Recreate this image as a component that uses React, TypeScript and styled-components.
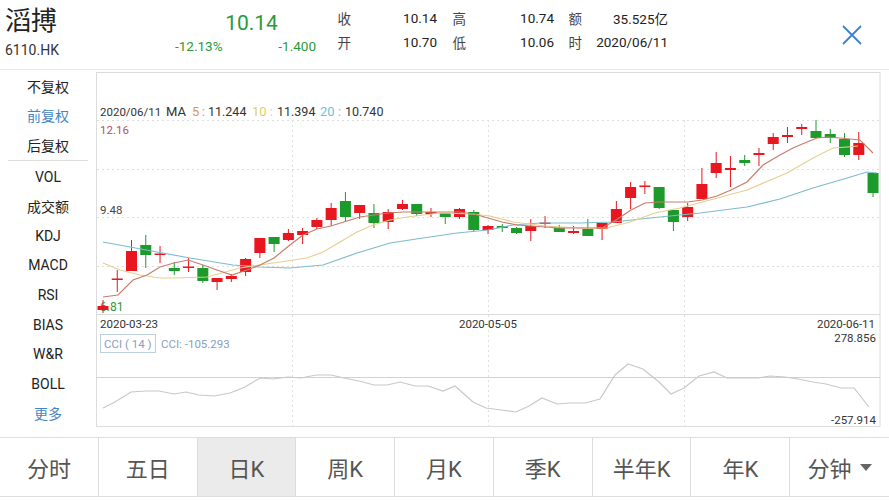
import styled, { createGlobalStyle } from 'styled-components';

const GlobalStyle = createGlobalStyle`
  html, body {
    margin: 0;
    padding: 0;
    background: #fff;
  }
  body {
    font-family: Roboto, "Noto Sans CJK SC", sans-serif;
  }
`;

const RED = '#e8161e';
const GREEN = '#1c9a2c';

// [bodyTop, bodyBottom, wickTop, wickBottom, colour]
const CANDLES: [number, number, number, number, 'r' | 'g'][] = [
  [306, 310, 300, 313, 'r'],
  [278.5, 280, 270, 292, 'r'],
  [251, 271, 240, 271, 'r'],
  [245, 255, 235, 268, 'g'],
  [253.5, 255, 246, 263, 'r'],
  [268, 271, 262, 275, 'g'],
  [266.5, 268, 258, 272, 'r'],
  [268, 281, 265, 283, 'g'],
  [278, 282, 278, 290, 'r'],
  [276, 279, 274, 282, 'r'],
  [259, 272, 258, 276, 'r'],
  [238, 253, 238, 258, 'r'],
  [237, 244, 237, 252, 'g'],
  [233, 240, 229, 241, 'r'],
  [231, 235, 228, 244, 'r'],
  [220, 227, 218, 229, 'r'],
  [208, 220, 203, 226, 'r'],
  [201, 217, 192, 222, 'g'],
  [205, 213, 205, 219, 'r'],
  [213, 223, 204, 228, 'g'],
  [212, 222, 209, 229, 'r'],
  [204, 209, 200, 210, 'r'],
  [204, 214, 204, 216, 'g'],
  [212, 214, 208, 217, 'r'],
  [213, 217, 213, 224, 'g'],
  [209, 217, 208, 219, 'r'],
  [212, 230, 210, 232, 'g'],
  [226, 230, 225, 234, 'r'],
  [226, 228, 224, 232, 'g'],
  [228, 233, 227, 234, 'g'],
  [226, 231, 219, 241, 'r'],
  [222.5, 224, 216, 228, 'r'],
  [228, 232, 225, 232, 'g'],
  [231, 233, 226, 234, 'r'],
  [229, 236, 219, 236, 'g'],
  [223, 229, 223, 240, 'r'],
  [209, 223, 201, 223, 'r'],
  [187, 198, 182, 209, 'r'],
  [185.5, 187, 181, 194, 'r'],
  [187, 208, 187, 209, 'g'],
  [210, 222, 210, 231, 'g'],
  [207, 217, 203, 221, 'r'],
  [184, 199, 168, 199, 'r'],
  [163, 173, 152, 178, 'r'],
  [168, 170, 156, 187, 'r'],
  [160, 163, 155, 166, 'g'],
  [153, 155, 148, 166, 'r'],
  [137, 144, 133, 150, 'r'],
  [135, 137, 127, 143, 'r'],
  [127, 129, 124, 135, 'r'],
  [131, 138, 120, 138, 'g'],
  [134, 138, 129, 143, 'g'],
  [139, 155, 133, 157, 'g'],
  [143, 155, 132, 160, 'r'],
  [173, 193, 173, 197, 'g'],
];

const MA5 =
  '103,297 118,295 133,280 147,275 160,267 174,263 188,260 203,265 217,270 232,275 247,270 260,265 274,258 290,245 303,235 317,229 331,226 347,221 360,217 374,215 388,213 403,212 417,212 431,212 445,212 459,212 474,214 488,218 502,222 517,225 531,226 545,227 559,228 574,228 588,228 602,228 616,220 631,210 645,203 659,202 673,202 688,202 702,200 717,196 731,190 747,182 763,165 780,155 793,148 807,142 817,138 827,137 840,138 860,140 873,153';

const MA10 =
  '103,263 120,270 140,275 160,278 175,278 207,277 240,268 273,263 307,258 323,252 340,242 357,232 373,225 390,220 407,217 440,213 473,214 490,216 513,222 545,226 580,228 607,228 630,222 655,213 680,208 710,200 747,190 787,173 813,158 833,148 847,147 858,146';

const MA20 =
  '103,242 130,247 157,252 190,258 233,265 260,267 290,268 323,265 357,253 390,243 423,238 457,233 488,230 513,225 540,223 580,223 613,222 650,218 700,213 747,207 780,199 813,188 847,178 867,172 877,173';

const CCI =
  '103,408 115,402 131,392 146,391 159,391 174,394 186,392 199,395 214,396 230,393 245,387 260,378 273,379 288,377 301,378 316,375 331,375 344,378 359,381 374,385 387,385 400,382 415,386 428,386 443,391 455,386 473,402 486,408 501,410 516,412 529,406 542,398 557,404 570,403 585,403 600,399 615,375 628,364 643,369 659,382 671,394 684,388 699,376 714,372 727,378 742,378 758,378 770,376 785,377 798,379 813,382 826,384 841,388 854,388 869,407';

function KChart() {
  return (
    <svg width={785} height={356} viewBox="96 72 785 356">
      <rect x={96.5} y={72.5} width={783.5} height={354} fill="none" stroke="#dcdcdc" />
      <line x1={96} y1={314.5} x2={880} y2={314.5} stroke="#dcdcdc" />
      <line x1={96} y1={377.5} x2={880} y2={377.5} stroke="#d2d2d2" />
      {[120.5, 169.5, 217.5, 266.5].map((y) => (
        <line key={y} x1={97} y1={y} x2={880} y2={y} stroke="#dedede" strokeDasharray="2 3" />
      ))}
      {[292.5, 488.5, 684.5].map((x) => (
        <line key={x} x1={x} y1={120} x2={x} y2={426} stroke="#e0e0e0" strokeDasharray="2 3" />
      ))}

      <g fontFamily="Roboto, sans-serif" fontSize={12}>
        <text x={100} y={116} fill="#333" fontSize={11.5}>2020/06/11</text>
        <text x={166} y={116} fill="#333" fontSize={13}>MA</text>
        <text x={192} y={116} fill="#d9955a" fontSize={13}>5</text>
        <text x={202} y={116} fill="#d9955a">:</text>
        <text x={208} y={116} fill="#333" fontSize={12.5}>11.244</text>
        <text x={252} y={116} fill="#dccf6a" fontSize={13}>10</text>
        <text x={270} y={116} fill="#dccf6a">:</text>
        <text x={277} y={116} fill="#333" fontSize={12.5}>11.394</text>
        <text x={320} y={116} fill="#6fbfd2" fontSize={13}>20</text>
        <text x={338} y={116} fill="#6fbfd2">:</text>
        <text x={345} y={116} fill="#333" fontSize={12.5}>10.740</text>

        <text x={100} y={134} fill="#b4525c" fontSize={11.5}>12.16</text>
        <text x={100} y={214} fill="#444" fontSize={11.5}>9.48</text>
        <text x={100} y={311} fill="#2f9a3c" fontSize={12}>6.81</text>

        <text x={100} y={328} fill="#333" fontSize={11.5}>2020-03-23</text>
        <text x={488} y={328} fill="#333" fontSize={11.5} textAnchor="middle">2020-05-05</text>
        <text x={875} y={328} fill="#333" fontSize={11.5} textAnchor="end">2020-06-11</text>
        <text x={876} y={342} fill="#333" fontSize={11.5} textAnchor="end">278.856</text>
        <text x={876} y={424} fill="#333" fontSize={11.5} textAnchor="end">-257.914</text>

        <rect x={100.5} y={334.5} width={55} height={18} fill="none" stroke="#bdd0e2" />
        <text x={104} y={348} fill="#88a0bc" fontSize={11.5}>CCI ( 14 )</text>
        <text x={161} y={348} fill="#88a0bc" fontSize={11.5}>CCI: -105.293</text>
      </g>

      {CANDLES.map(([bt, bb, wt, wb, c], i) => {
        const x = 103 + i * 14.26;
        const col = c === 'r' ? RED : GREEN;
        return (
          <g key={i}>
            <line x1={x} y1={wt} x2={x} y2={wb} stroke={col} strokeWidth={1} />
            <rect x={x - 5.5} y={bt} width={11} height={Math.max(bb - bt, 1.5)} fill={col} />
          </g>
        );
      })}

      <polyline points={MA20} fill="none" stroke="#7cbccc" strokeWidth={1.2} />
      <polyline points={MA10} fill="none" stroke="#e6cf90" strokeWidth={1.2} />
      <polyline points={MA5} fill="none" stroke="#c97c6a" strokeWidth={1.2} />
      <polyline points={CCI} fill="none" stroke="#c8c8c8" strokeWidth={1.2} />
    </svg>
  );
}

const SIDE_TOP = ['不复权', '前复权', '后复权'];
const SIDE_BOTTOM = ['VOL', '成交额', 'KDJ', 'MACD', 'RSI', 'BIAS', 'W&R', 'BOLL', '更多'];
const TABS = ['分时', '五日', '日K', '周K', '月K', '季K', '半年K', '年K', '分钟'];

function App() {
  return (
    <Page>
      <GlobalStyle />
      <Header>
        <NameBlock>
          <StockName>滔搏</StockName>
          <StockCode>6110.HK</StockCode>
        </NameBlock>
        <PriceBlock>
          <Price>10.14</Price>
          <Changes>
            <span>-12.13%</span>
            <span>-1.400</span>
          </Changes>
        </PriceBlock>
        <Stats>
          <StatLabel>收</StatLabel>
          <StatValue>10.14</StatValue>
          <StatLabel>高</StatLabel>
          <StatValue>10.74</StatValue>
          <StatLabel>额</StatLabel>
          <StatValue>35.525亿</StatValue>
          <StatLabel>开</StatLabel>
          <StatValue>10.70</StatValue>
          <StatLabel>低</StatLabel>
          <StatValue>10.06</StatValue>
          <StatLabel>时</StatLabel>
          <StatValue>2020/06/11</StatValue>
        </Stats>
        <CloseButton>
          <svg width="22" height="22" viewBox="0 0 22 22">
            <path d="M2 2 L20 20 M20 2 L2 20" stroke="#3c80d6" strokeWidth="1.8" fill="none" />
          </svg>
        </CloseButton>
      </Header>
      <Body>
        <Sidebar>
          {SIDE_TOP.map((s) => (
            <SideItem key={s} $active={s === '前复权'}>
              {s}
            </SideItem>
          ))}
          <SideDivider />
          {SIDE_BOTTOM.map((s) => (
            <SideItem key={s} $active={s === '更多'}>
              {s}
            </SideItem>
          ))}
        </Sidebar>
        <ChartWrap>
          <KChart />
        </ChartWrap>
      </Body>
      <TabBar>
        {TABS.map((t) => (
          <Tab key={t} $active={t === '日K'}>
            {t}
            {t === '分钟' && <Caret />}
          </Tab>
        ))}
      </TabBar>
    </Page>
  );
}

const Page = styled.div`
  width: 889px;
  height: 500px;
  display: flex;
  flex-direction: column;
  overflow: hidden;
  background: #fff;
`;

const Header = styled.div`
  height: 69px;
  border-bottom: 1px solid #e8e8e8;
  display: flex;
`;

const NameBlock = styled.div`
  width: 170px;
  padding: 6px 0 0 5px;
  box-sizing: border-box;
`;

const StockName = styled.div`
  font-size: 26px;
  line-height: 30px;
  color: #222;
`;

const StockCode = styled.div`
  font-size: 14px;
  line-height: 18px;
  color: #333;
  margin-top: 5px;
`;

const PriceBlock = styled.div`
  width: 141px;
  margin-left: 5px;
  padding-top: 10px;
  display: flex;
  flex-direction: column;
`;

const Price = styled.div`
  font-size: 21px;
  line-height: 26px;
  color: #2a9a38;
  text-align: center;
  padding-left: 12px;
`;

const Changes = styled.div`
  display: flex;
  justify-content: space-between;
  font-size: 13.5px;
  line-height: 18px;
  color: #2a9a38;
  margin-top: 1px;
`;

const Stats = styled.div`
  margin-left: 21px;
  padding-top: 6px;
  display: grid;
  grid-template-columns: 14px 86px 29px 88px 28px 86px;
  grid-auto-rows: 24px;
  align-items: center;
  font-size: 13.5px;
`;

const StatLabel = styled.span`
  color: #444;
  text-align: right;
`;

const StatValue = styled.span`
  color: #222;
  text-align: right;
`;

const CloseButton = styled.div`
  margin-left: auto;
  margin-right: 26px;
  align-self: center;
  display: flex;
`;

const Body = styled.div`
  height: 367px;
  display: flex;
`;

const Sidebar = styled.div`
  width: 96px;
  padding-top: 1px;
  display: flex;
  flex-direction: column;
  box-sizing: border-box;
`;

const SideItem = styled.div<{ $active?: boolean }>`
  height: 29.6px;
  display: flex;
  align-items: center;
  justify-content: center;
  font-size: 14px;
  color: ${(p) => (p.$active ? '#3f87c6' : '#222')};
`;

const SideDivider = styled.div`
  height: 1px;
  background: #dddddd;
  margin: 0 8px 1px;
`;

const ChartWrap = styled.div`
  flex: 1;
  padding-top: 2px;
  svg {
    display: block;
  }
`;

const TabBar = styled.div`
  height: 58px;
  display: grid;
  grid-template-columns: repeat(9, 1fr);
  border-top: 1px solid #dddddd;
  border-bottom: 1px solid #dddddd;
`;

const Tab = styled.div<{ $active?: boolean }>`
  display: flex;
  align-items: center;
  justify-content: center;
  gap: 8px;
  font-size: 22px;
  color: #555;
  background: ${(p) => (p.$active ? '#ebebeb' : '#fff')};
  border-right: 1px solid #dddddd;
  &:last-child {
    border-right: none;
  }
`;

const Caret = styled.span`
  width: 0;
  height: 0;
  border-left: 6px solid transparent;
  border-right: 6px solid transparent;
  border-top: 7px solid #666;
`;

export default App;
